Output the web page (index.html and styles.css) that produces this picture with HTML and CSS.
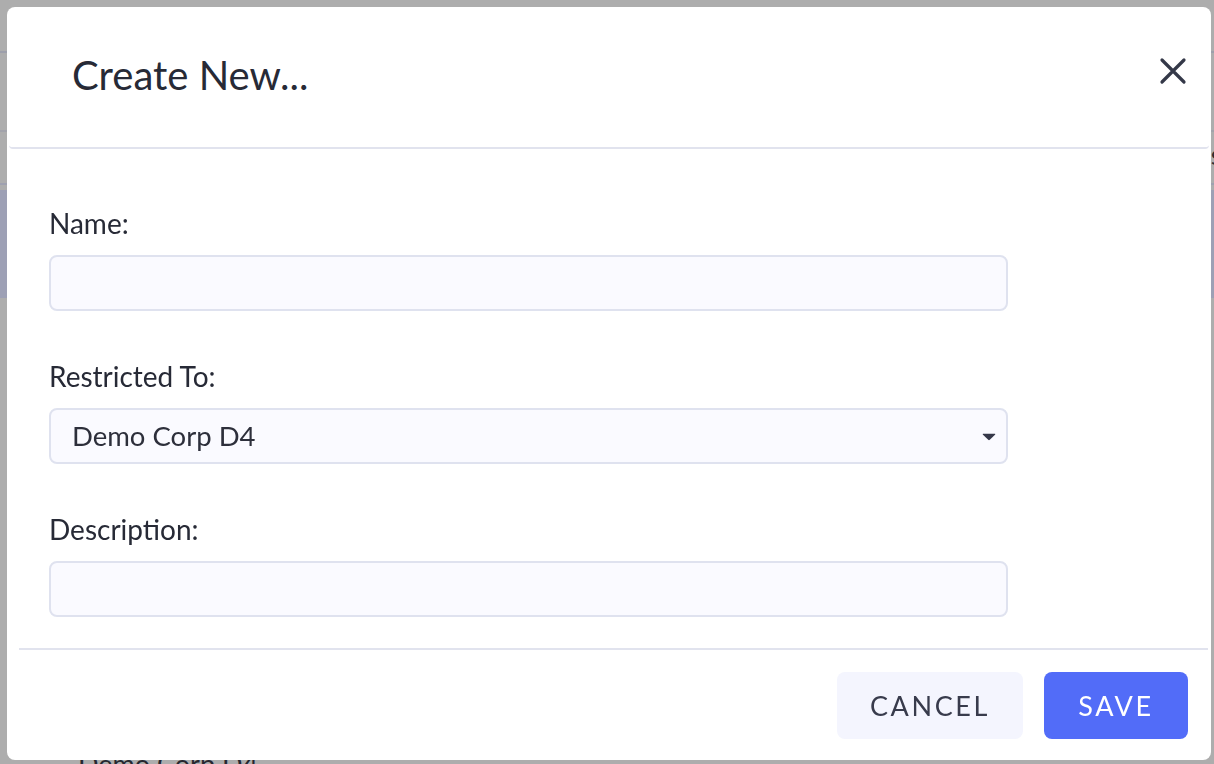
FILE: index.html
```html
<!DOCTYPE html>
<html>
<head>
<meta charset="utf-8">
<title>Create New</title>
<link rel="stylesheet" href="styles.css">
</head>
<body>
<div class="page">
  <div class="page-top"></div>
  <div class="page-sub"></div>
  <div class="page-tabs"><span class="tab-text">s</span></div>
  <div class="page-hero"></div>
  <div class="page-list">
    <div class="page-item">Demo Corp D4</div>
  </div>
</div>

<div class="overlay">
  <div class="modal">
    <div class="modal-header">
      <h1 class="modal-title">Create New...</h1>
      <button class="close-btn" aria-label="Close">
        <svg width="28" height="28" viewBox="0 0 28 28"><path d="M3 3 L25 25 M25 3 L3 25" stroke="#343848" stroke-width="3.2" stroke-linecap="round" fill="none"/></svg>
      </button>
    </div>
    <div class="modal-body">
      <div class="field">
        <label class="field-label">Name:</label>
        <div class="field-input"></div>
      </div>
      <div class="field">
        <label class="field-label">Restricted To:</label>
        <div class="field-input field-select">
          <span class="select-value">Demo Corp D4</span>
          <svg class="caret" width="14" height="8" viewBox="0 0 14 8"><path d="M1.2 0.8 H12.8 Q13.8 0.8 13 1.8 L7.8 6.8 Q7 7.5 6.2 6.8 L1 1.8 Q0.2 0.8 1.2 0.8 Z" fill="#353849"/></svg>
        </div>
      </div>
      <div class="field">
        <label class="field-label">Description:</label>
        <div class="field-input"></div>
      </div>
    </div>
    <div class="modal-footer">
      <button class="btn btn-cancel">CANCEL</button>
      <button class="btn btn-save">SAVE</button>
    </div>
  </div>
</div>
</body>
</html>
```

FILE: styles.css
```css
* { box-sizing: border-box; }
html, body { margin: 0; padding: 0; }
body {
  width: 1214px;
  height: 764px;
  overflow: hidden;
  background: #adadad;
  font-family: Lato, "Open Sans", sans-serif;
  color: #2a2c39;
}

/* dimmed page behind the dialog */
.page { display: flex; flex-direction: column; }
.page-top { height: 53px; border-bottom: 2px solid #9d9fab; }
.page-sub { height: 79px; border-bottom: 2px solid #a2a3ab; }
.page-tabs {
  height: 53px;
  border-bottom: 2px solid #9fa1b0;
  display: flex;
  justify-content: flex-end;
  align-items: center;
}
.tab-text { font-size: 26px; color: #2a2b31; margin-right: -8px; margin-top: -6px; }
.page-hero { height: 108px; margin-top: 5px; background: #9da0b5; }
.page-list { padding: 449px 0 0 78px; }
.page-item { font-size: 27px; color: #262730; }

/* overlay + dialog */
.overlay {
  position: fixed;
  inset: 0;
}
.modal {
  position: absolute;
  left: 7px;
  top: 7px;
  width: 1204px;
  height: 753px;
  background: #ffffff;
  border-radius: 8px;
  display: flex;
  flex-direction: column;
}
.modal-header {
  height: 142px;
  margin: 0 2px;
  border-bottom: 2px solid #e1e3ee;
  border-radius: 0 0 4px 4px;
  display: flex;
  align-items: center;
  justify-content: space-between;
  padding: 0 22px 4px 63px;
}
.modal-title {
  margin: 0;
  font-size: 40px;
  font-weight: 400;
  color: #272a36;
  letter-spacing: 0;
}
.close-btn {
  border: 0;
  background: transparent;
  padding: 0;
  width: 28px;
  height: 28px;
  display: flex;
  cursor: pointer;
  margin-bottom: 8px;
}

.modal-body {
  padding: 57px 42px 0 42px;
  display: flex;
  flex-direction: column;
  gap: 48px;
}
.field { display: flex; flex-direction: column; gap: 15px; }
.field-label {
  font-size: 28px;
  line-height: 34px;
  color: #272a36;
}
.field-input {
  width: 959px;
  height: 56px;
  border: 2px solid #dfe2ef;
  border-radius: 8px;
  background: #fafaff;
}
.field-select {
  display: flex;
  align-items: center;
  justify-content: space-between;
  padding: 0 10px 0 21px;
}
.select-value { font-size: 27.5px; color: #2d2f3b; margin-top: -2px; }
.caret { display: block; margin-top: 2px; }

.modal-footer {
  margin: 31px 3px 0 12px;
  border-top: 2px solid #e1e3ee;
  display: flex;
  justify-content: flex-end;
  gap: 21px;
  padding: 22px 20px 0 0;
}
.btn {
  height: 67px;
  border: 0;
  border-radius: 8px;
  font-family: Lato, "Open Sans", sans-serif;
  font-size: 27px;
  letter-spacing: 2.6px;
  cursor: pointer;
  padding: 0;
}
.btn-cancel { width: 186px; background: #f4f5fe; color: #383b4c; }
.btn-save { width: 144px; background: #526cf8; color: #ffffff; }
```
